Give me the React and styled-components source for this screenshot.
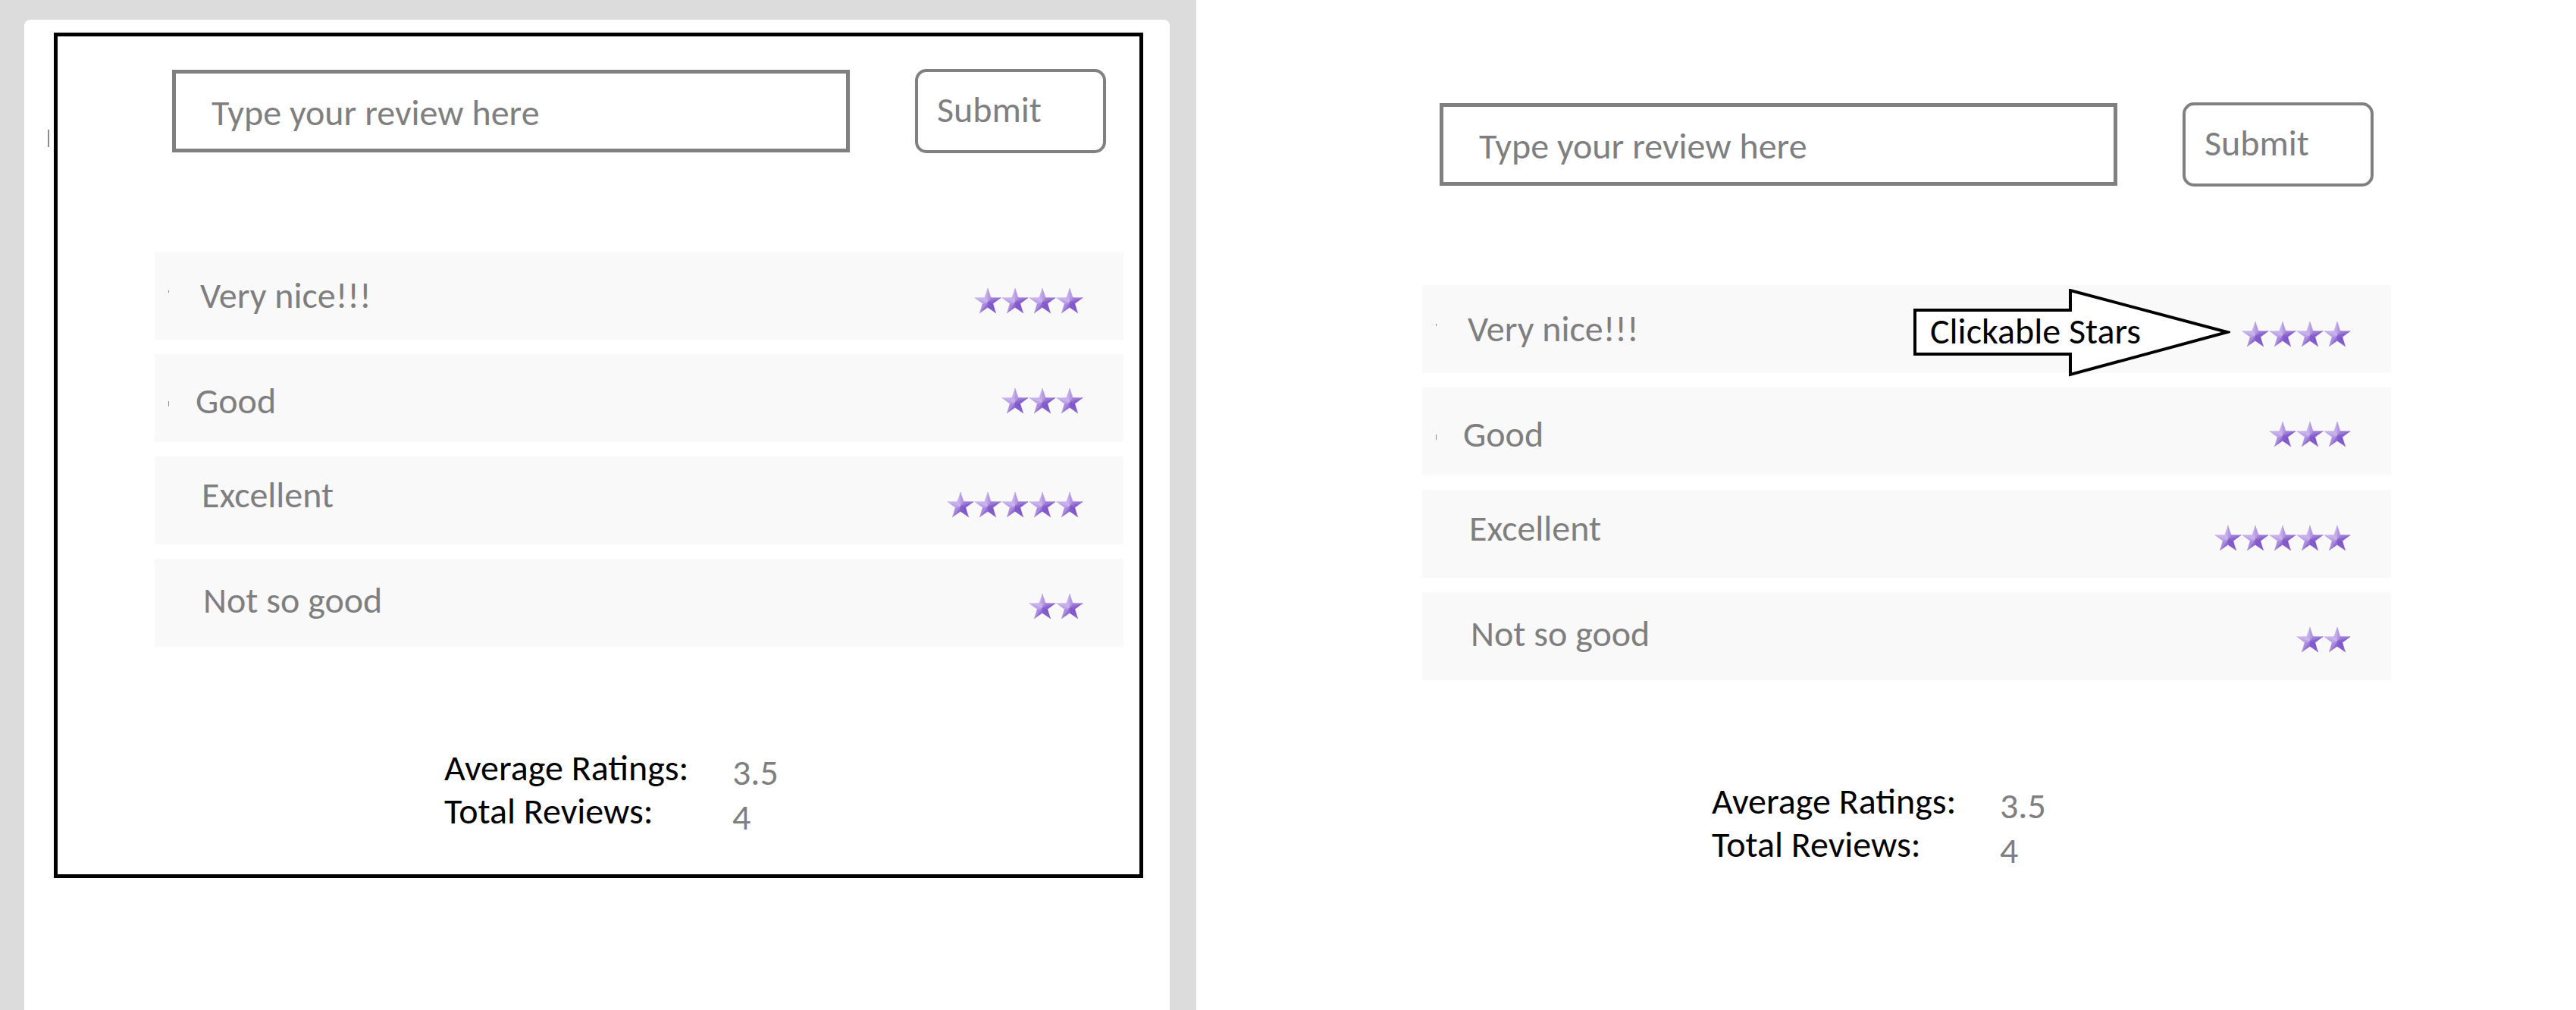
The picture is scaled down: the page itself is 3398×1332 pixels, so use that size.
import React from 'react';
import styled, { createGlobalStyle } from 'styled-components';

const FONT = `Carlito, Calibri, Lato, "Open Sans", sans-serif`;
const FS = 48;
const CAP = 9; // distance from line top to cap top at line-height 1
const GRAY = '#7f7f7f';

const GlobalStyle = createGlobalStyle`
  html, body { margin: 0; padding: 0; background: #ffffff; }
  body { font-family: ${FONT}; }
  * { box-sizing: border-box; }
`;

const Page = styled.div`
  display: flex;
  width: 3398px;
  height: 1332px;
  overflow: hidden;
  background: #ffffff;
`;

const EditorPane = styled.div`
  flex: none;
  width: 1578px;
  display: flex;
  padding: 26px 35px 0 32px;
  background: #dcdcdc;
`;

const Sheet = styled.div`
  flex: 1;
  padding: 17px 0 0 39px;
  background: #ffffff;
  border-radius: 8px 8px 0 0;
`;

const Frame = styled.div`
  position: relative;
  width: 1437px;
  height: 1115px;
  border: 5px solid #000000;
  &::before {
    content: '';
    position: absolute;
    left: -13px;
    top: 123px;
    width: 2px;
    height: 23px;
    background: #8c8c8c;
  }
`;

const PreviewPane = styled.div`
  flex: 1;
  padding: 92px 0 0 170px;
  background: #ffffff;
`;

const Widget = styled.div`
  display: flex;
  flex-direction: column;
  width: 1427px;
`;

const Form = styled.div`
  display: flex;
  align-items: center;
  gap: 86px;
  margin-top: 43px;
  padding-left: 151px;
`;

const ReviewField = styled.div`
  width: 894px;
  height: 109px;
  padding: ${42 - 5 - CAP}px 0 0 47px;
  border: 5px solid #808080;
  background: #ffffff;
  color: ${GRAY};
  font-size: ${FS}px;
  line-height: 1;
  white-space: nowrap;
`;

const SubmitButton = styled.button`
  display: flex;
  align-items: flex-start;
  width: 252px;
  height: 111px;
  margin: 0;
  padding: ${39 - 4 - CAP}px 0 0 25px;
  border: 4px solid #808080;
  border-radius: 15px;
  background: #ffffff;
  color: ${GRAY};
  font-family: ${FONT};
  font-size: ${FS}px;
  line-height: 1;
  cursor: pointer;
`;

const List = styled.div`
  display: flex;
  flex-direction: column;
  gap: 19px;
  width: 1278px;
  margin: 130px 0 0 128px;
`;

const Row = styled.div`
  position: relative;
  display: flex;
  align-items: flex-start;
  height: 116px;
  padding: 0 53px 0 18px;
  background: #f9f9f9;
`;

const Tick = styled.span`
  flex: none;
  width: 1px;
  height: ${(p) => p.$h}px;
  margin-top: ${(p) => p.$top}px;
  background: ${(p) => (p.$h ? '#8c8c8c' : 'transparent')};
`;

const ReviewText = styled.span`
  margin: ${(p) => p.$top - CAP}px 0 0 ${(p) => p.$indent - 19}px;
  color: ${GRAY};
  font-size: ${FS}px;
  line-height: 1;
  white-space: nowrap;
`;

const Stars = styled.div`
  display: flex;
  margin: ${(p) => p.$top}px 0 0 auto;
`;

const StarButton = styled.button`
  display: block;
  width: 36px;
  height: 35px;
  margin: 0;
  padding: 0;
  border: 0;
  background: none;
  cursor: pointer;
  svg { display: block; }
`;

const Callout = styled.div`
  position: absolute;
  left: 648px;
  top: 5px;
  width: 418px;
  height: 116px;
  padding: ${41 - CAP}px 0 0 22px;
  svg {
    position: absolute;
    left: 0;
    top: 0;
  }
`;

const CalloutLabel = styled.span`
  position: relative;
  color: #000000;
  font-size: ${FS}px;
  line-height: 1;
  white-space: nowrap;
`;

const Summary = styled.div`
  display: grid;
  grid-template-columns: 380px auto;
  grid-auto-rows: 57px;
  margin: 131px 0 0 510px;
  font-size: ${FS}px;
  line-height: 57px;
`;

const SummaryLabel = styled.span`
  color: #000000;
`;

const SummaryValue = styled.span`
  padding-top: ${(p) => p.$shift}px;
  color: ${GRAY};
`;

const REVIEWS = [
  { text: 'Very nice!!!', stars: 4, indent: 60, textTop: 43, starTop: 47, tick: { top: 51, h: 3 } },
  { text: 'Good', stars: 3, indent: 54, textTop: 47, starTop: 44, tick: { top: 62, h: 7 } },
  { text: 'Excellent', stars: 5, indent: 62, textTop: 36, starTop: 46, tick: { top: 0, h: 0 } },
  { text: 'Not so good', stars: 2, indent: 64, textTop: 40, starTop: 45, tick: { top: 0, h: 0 } },
];

// star geometry: bevelled five-point star, lit from the top left
const CX = 18;
const CY = 19.2;
const R_OUT = 18;
const R_IN = 7.2;
const pt = (deg, r) => [CX + r * Math.cos((deg * Math.PI) / 180), CY + r * Math.sin((deg * Math.PI) / 180)];
const LIGHT = [205, 183, 238];
const DARK = [112, 66, 194];
const mix = (b) => {
  const c = LIGHT.map((l, i) => Math.round(DARK[i] + (l - DARK[i]) * b));
  return `rgb(${c[0]},${c[1]},${c[2]})`;
};
const FACETS = [];
for (let i = 0; i < 5; i++) {
  const a = -90 + i * 72;
  const o = pt(a, R_OUT);
  [-36, 36].forEach((d) => {
    const inner = pt(a + d, R_IN);
    const mid = a + d / 2;
    const b = 0.5 + 0.5 * Math.cos(((mid - 225) * Math.PI) / 180);
    FACETS.push({
      points: `${CX},${CY} ${o[0].toFixed(2)},${o[1].toFixed(2)} ${inner[0].toFixed(2)},${inner[1].toFixed(2)}`,
      fill: mix(0.15 + 0.8 * b),
    });
  });
}

function Star() {
  return (
    <svg width="36" height="35" viewBox="0 0 36 35" aria-hidden="true">
      {FACETS.map((f, i) => (
        <polygon key={i} points={f.points} fill={f.fill} stroke={f.fill} strokeWidth="0.4" strokeLinejoin="round" />
      ))}
    </svg>
  );
}

function StarRating({ count, top }) {
  return (
    <Stars $top={top}>
      {Array.from({ length: count }).map((_, i) => (
        <StarButton key={i} aria-label={`${i + 1} star`}>
          <Star />
        </StarButton>
      ))}
    </Stars>
  );
}

function ArrowCallout() {
  return (
    <Callout>
      <svg width="418" height="116" viewBox="0 0 418 116">
        <polygon
          points="2,28 207,28 207,2 414,57 207,113 207,86 2,86"
          fill="#ffffff"
          stroke="#000000"
          strokeWidth="4"
          strokeLinejoin="miter"
        />
      </svg>
      <CalloutLabel>Clickable Stars</CalloutLabel>
    </Callout>
  );
}

function ReviewWidget({ annotated }) {
  return (
    <Widget>
      <Form>
        <ReviewField role="textbox">Type your review here</ReviewField>
        <SubmitButton>Submit</SubmitButton>
      </Form>
      <List>
        {REVIEWS.map((r, i) => (
          <Row key={r.text}>
            <Tick $top={r.tick.top} $h={r.tick.h} />
            <ReviewText $top={r.textTop} $indent={r.indent}>{r.text}</ReviewText>
            <StarRating count={r.stars} top={r.starTop} />
            {annotated && i === 0 && <ArrowCallout />}
          </Row>
        ))}
      </List>
      <Summary>
        <SummaryLabel>Average Ratings:</SummaryLabel>
        <SummaryValue $shift={6}>3.5</SummaryValue>
        <SummaryLabel>Total Reviews:</SummaryLabel>
        <SummaryValue $shift={8}>4</SummaryValue>
      </Summary>
    </Widget>
  );
}

export default function App() {
  return (
    <>
      <GlobalStyle />
      <Page>
        <EditorPane>
          <Sheet>
            <Frame>
              <ReviewWidget />
            </Frame>
          </Sheet>
        </EditorPane>
        <PreviewPane>
          <ReviewWidget annotated />
        </PreviewPane>
      </Page>
    </>
  );
}
